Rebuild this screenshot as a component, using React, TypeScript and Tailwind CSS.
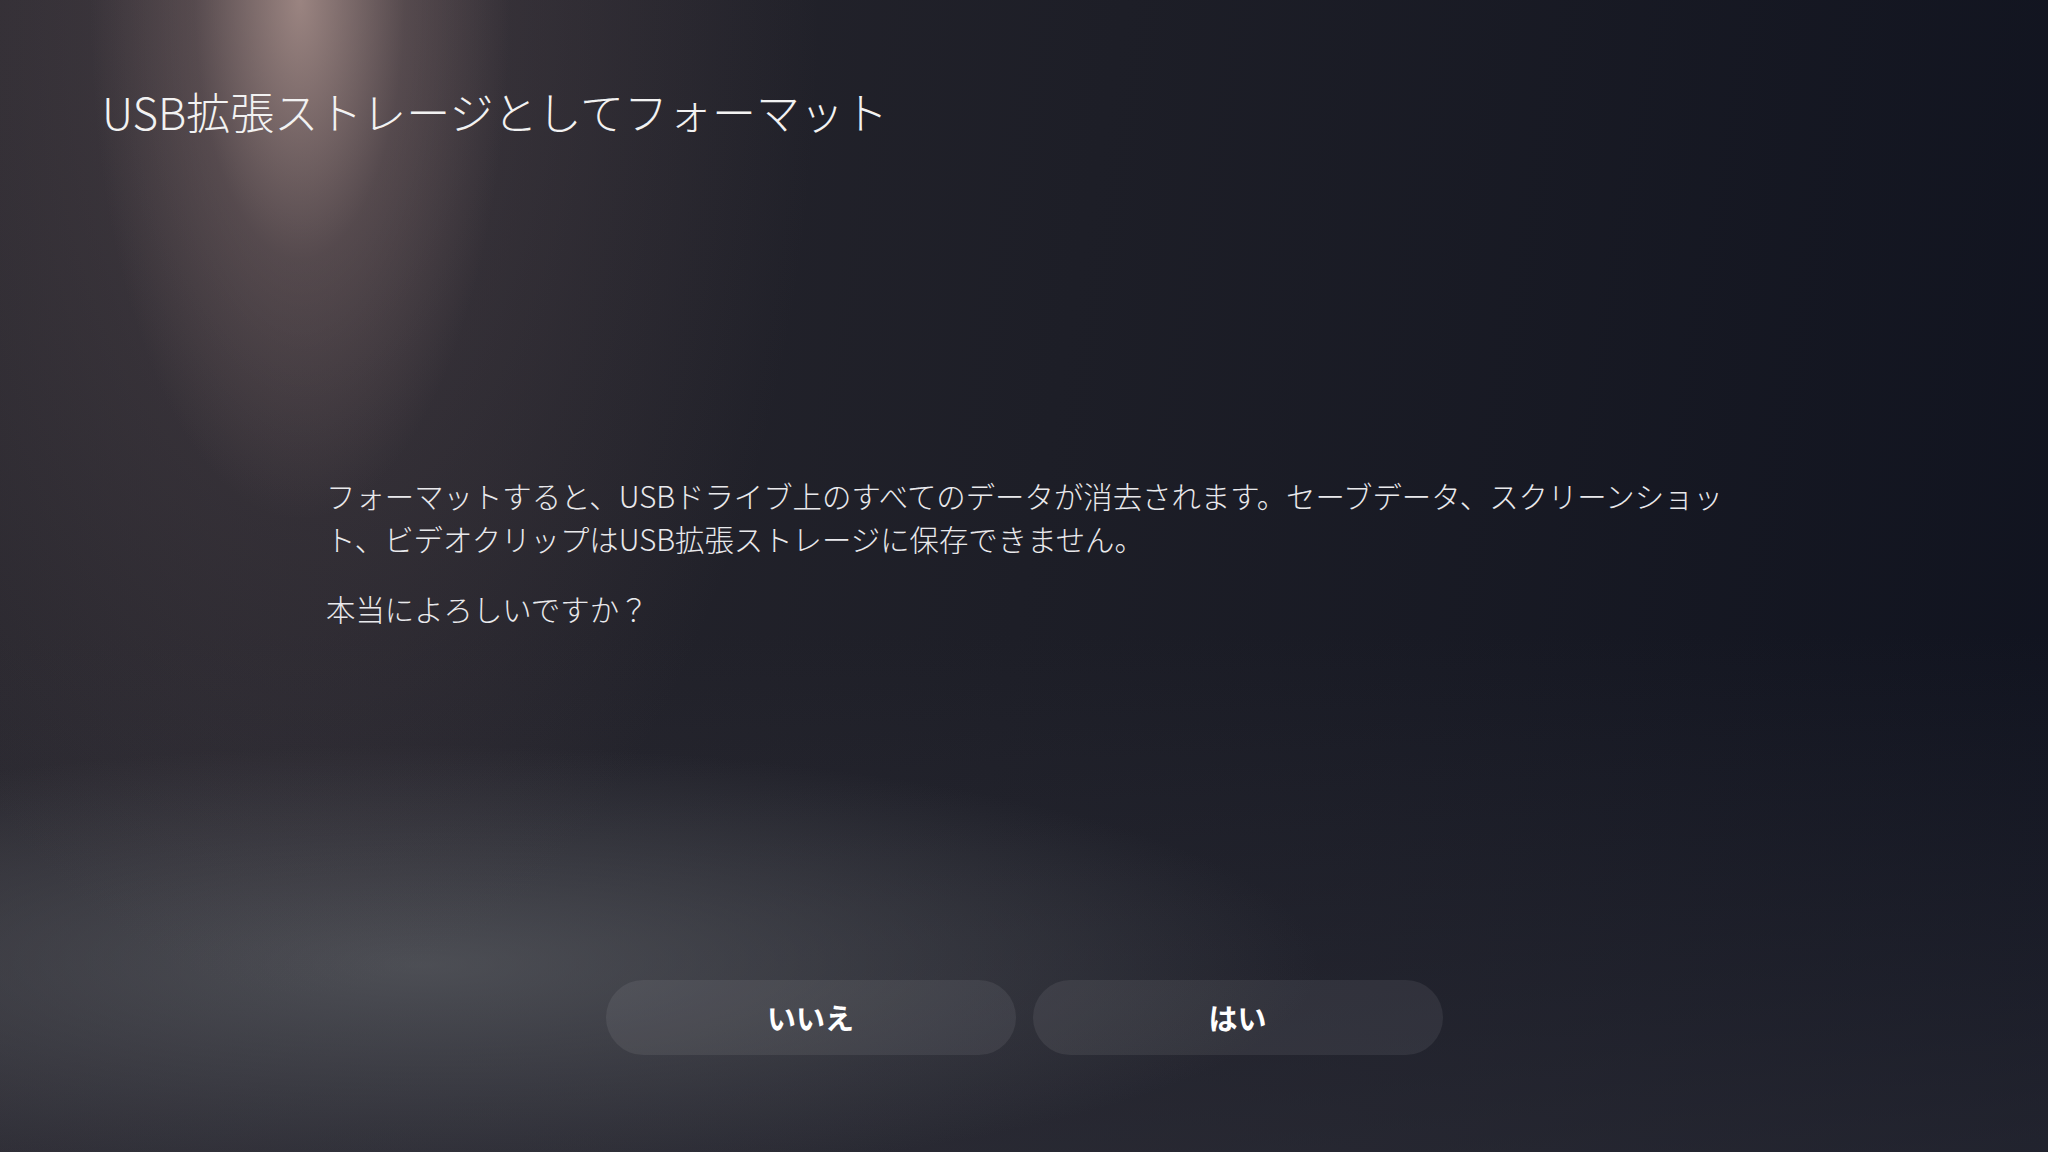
export default function App() {
  return (
    <div
      className="relative flex h-[1152px] w-full flex-col overflow-hidden bg-[radial-gradient(ellipse_210px_520px_at_300px_0px,rgba(170,145,140,0.85),rgba(125,105,105,0.4)_50%,transparent_100%),radial-gradient(ellipse_520px_1000px_at_300px_0px,rgba(105,88,92,0.4),transparent_100%),radial-gradient(ellipse_900px_220px_at_420px_965px,rgba(100,103,108,0.6),transparent_100%),linear-gradient(to_bottom,transparent_55%,rgba(55,55,65,0.45)_100%),linear-gradient(100deg,#2b2930_0%,#1d1e27_50%,#10131f_100%)] text-[#f2f2f2]"
      style={{ fontFamily: '"Noto Sans CJK JP", "Noto Sans", sans-serif' }}
    >
      <h1 className="pl-[102px] pt-[85px] text-[44px] font-light leading-[52px]">
        USB拡張ストレージとしてフォーマット
      </h1>

      <div className="mt-[337px] pl-[326px] text-[29.4px] font-light leading-[43px] text-[#e9e9ec]">
        <p>
          フォーマットすると、USBドライブ上のすべてのデータが消去されます。セーブデータ、スクリーンショッ
          <br />
          ト、ビデオクリップはUSB拡張ストレージに保存できません。
        </p>
        <p className="mt-[27px]">本当によろしいですか？</p>
      </div>

      <div className="mt-auto flex justify-center gap-[17px] pb-[97px]">
        <button className="h-[75px] w-[410px] rounded-full bg-white/[0.07] text-[29px] font-bold text-white">
          いいえ
        </button>
        <button className="h-[75px] w-[410px] rounded-full bg-white/[0.07] text-[29px] font-bold text-white">
          はい
        </button>
      </div>
    </div>
  );
}
